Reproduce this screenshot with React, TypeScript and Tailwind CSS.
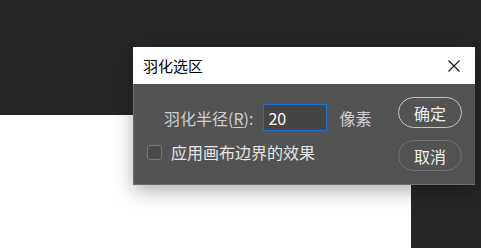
export default function App() {
  return (
    <div className="relative w-[481px] h-[248px] overflow-hidden bg-[#262626] font-['Microsoft_YaHei','Noto_Sans_CJK_SC',sans-serif]">
      {/* canvas area behind the dialog */}
      <div className="flex flex-col h-full">
        <div className="h-[115px]" />
        <div className="flex flex-1">
          <div className="w-[411px] bg-white" />
          <div className="flex-1" />
        </div>
      </div>

      {/* feather selection dialog */}
      <div className="absolute left-[133px] top-[47px] w-[342px] shadow-[0_6px_18px_rgba(0,0,0,0.3)]">
        <div className="flex h-[37px] items-center justify-between bg-white pl-[10px] pr-[15px]">
          <span className="text-[15px] leading-none text-black">羽化选区</span>
          <svg width="12" height="12" viewBox="0 0 12 12" className="block">
            <path d="M0.5 0.5 L11.5 11.5 M11.5 0.5 L0.5 11.5" stroke="#111" strokeWidth="1.1" fill="none" />
          </svg>
        </div>

        <div className="flex h-[101px] justify-between border-l border-b border-[#6f6f6f] bg-[#535353]">
          <div className="flex flex-col pl-[13px] pt-[20px]">
            <div className="ml-[17px] flex h-[27px] items-center">
              <span className="text-[16px] leading-none text-[#cfcfcf]">
                羽化半径(<span className="underline underline-offset-2">R</span>):
              </span>
              <div className="ml-[10px] flex h-[27px] w-[64px] items-center border-[1.5px] border-[#1a6fd8] bg-[#454545] pl-[4px]">
                <span className="text-[16px] leading-none text-white">20</span>
              </div>
              <span className="ml-[12px] text-[16px] leading-none text-[#cfcfcf]">像素</span>
            </div>
            <div className="mt-[9px] flex h-[24px] items-center gap-[9px]">
              <div className="mt-[1px] h-[15px] w-[15px] rounded-[3px] border-[1.5px] border-[#787878] bg-[#4a4a4a]" />
              <span className="text-[16px] leading-none text-[#e6e6e6]">应用画布边界的效果</span>
            </div>
          </div>

          <div className="flex flex-col gap-[12px] pr-[13px] pt-[13px]">
            <button className="flex h-[31px] w-[64px] items-center justify-center rounded-full border-[1.5px] border-[#c4c4c4] text-[16px] leading-none text-[#eeeeee]">
              确定
            </button>
            <button className="flex h-[31px] w-[64px] items-center justify-center rounded-full border-[1.5px] border-[#737373] text-[16px] leading-none text-[#eeeeee]">
              取消
            </button>
          </div>
        </div>
      </div>
    </div>
  )
}
